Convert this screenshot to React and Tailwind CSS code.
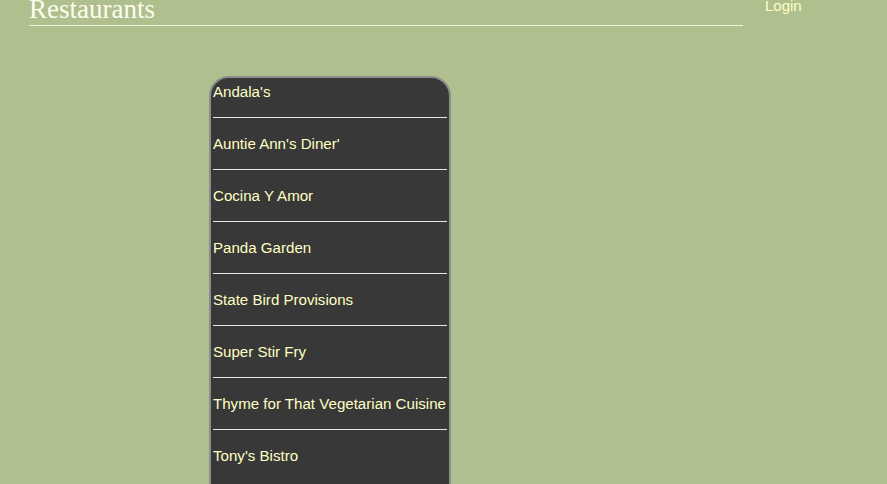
import React from 'react'

const restaurants = [
  "Andala's",
  "Auntie Ann's Diner'",
  'Cocina Y Amor',
  'Panda Garden',
  'State Bird Provisions',
  'Super Stir Fry',
  'Thyme for That Vegetarian Cuisine',
  "Tony's Bistro",
]

const App = () => {
  return (
    <div className='min-h-screen w-full bg-[#afbf8d] overflow-hidden' style={{ height: 484 }}>
      <div className='flex items-start pl-[29px]'>
        <div className='w-[714px] border-b border-[#eef2dc]'>
          <h1 className="-mt-[6px] h-[31px] text-[27px] leading-[31px] text-[#fdfdf0] font-['Liberation_Serif',serif]">
            Restaurants
          </h1>
        </div>
        <a className="ml-[22px] -mt-[3px] text-[15px] leading-[17px] text-[#ffffc4] font-['Liberation_Sans',Arial,sans-serif]">
          Login
        </a>
      </div>

      <div className='ml-[209px] mt-[50px] w-[242px] h-[500px] rounded-t-[20px] border-2 border-[#8c8c8c] bg-[#383838] px-[2px] pt-[5px]'>
        {restaurants.map((name, i) => (
          <div key={name}>
            <div className="text-[15.1px] leading-[17px] text-[#ffffc4] font-['Liberation_Sans',Arial,sans-serif] whitespace-nowrap">
              {name}
            </div>
            {i < restaurants.length - 1 && (
              <div className='mt-[17px] mb-[17px] h-px bg-[#e6e6e6]' />
            )}
          </div>
        ))}
      </div>
    </div>
  )
}

export default App
